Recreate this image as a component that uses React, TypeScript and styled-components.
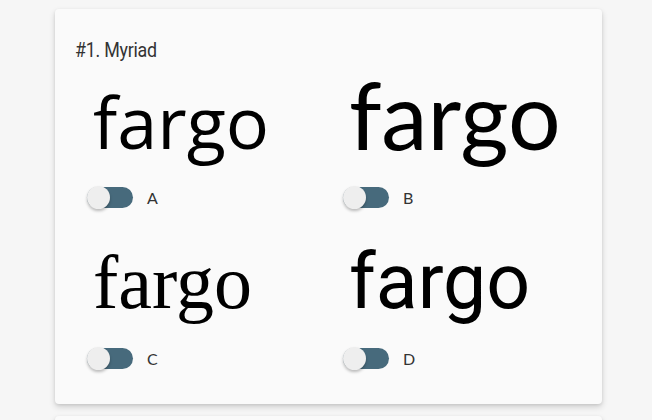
import styled, { createGlobalStyle } from 'styled-components'

const GlobalStyle = createGlobalStyle`
	body {
		margin: 0;
		background: #f6f6f6;
		font-family: 'Open Sans', sans-serif;
	}
`

const Page = styled.main`
	display: flex;
	flex-direction: column;
	gap: 12px;
	padding: 9px 0 0 55px;
`

const Card = styled.section`
	width: 547px;
	height: 395px;
	box-sizing: border-box;
	padding: 28px 20px 0;
	background: #fafafa;
	border-radius: 4px;
	box-shadow: 0 3px 6px rgba(0, 0, 0, 0.16), 0 1px 3px rgba(0, 0, 0, 0.08);
	flex-shrink: 0;
`

const Title = styled.h2`
	margin: 0;
	font-family: 'Roboto', sans-serif;
	font-weight: 400;
	font-size: 21px;
	line-height: 26px;
	color: #333;
	letter-spacing: -0.3px;
	transform: scaleX(0.85);
	transform-origin: left center;
`

const Grid = styled.div`
	display: grid;
	grid-template-columns: 256px 256px;
	grid-auto-rows: 161px;
	padding: 19px 0 0 12px;
`

const Cell = styled.div`
	display: flex;
	flex-direction: column;
`

const Sample = styled.div<{ $font: string; $size: number; $lh: number }>`
	height: 104px;
	font-family: ${p => p.$font};
	font-size: ${p => p.$size}px;
	line-height: ${p => p.$lh}px;
	color: #000;
	padding-left: 6px;
	white-space: nowrap;
`

const ToggleRow = styled.label`
	display: flex;
	align-items: center;
	gap: 14px;
	height: 22px;
`

const Track = styled.span`
	position: relative;
	width: 46px;
	height: 21px;
	border-radius: 11px;
	background: #476a7c;
`

const Thumb = styled.span`
	position: absolute;
	left: 0;
	top: -1px;
	width: 23px;
	height: 23px;
	border-radius: 50%;
	background: #eeeeee;
	box-shadow: 0 2px 3px rgba(0, 0, 0, 0.25);
`

const Letter = styled.span`
	font-family: 'Lato', 'Open Sans', sans-serif;
	font-size: 16px;
	color: #333;
	letter-spacing: 0.5px;
`

const samples = [
	{ key: 'A', font: "'Open Sans', sans-serif", size: 72, lh: 79 },
	{ key: 'B', font: "'Lato', sans-serif", size: 93, lh: 64 },
	{ key: 'C', font: "'Liberation Serif', serif", size: 76, lh: 78 },
	{ key: 'D', font: "'Roboto', sans-serif", size: 77, lh: 78 },
]

function Toggle({ label }: { label: string }) {
	return (
		<ToggleRow>
			<Track>
				<Thumb />
			</Track>
			<Letter>{label}</Letter>
		</ToggleRow>
	)
}

export default function App() {
	return (
		<>
			<GlobalStyle />
			<Page>
				<Card>
					<Title>#1. Myriad</Title>
					<Grid>
						{samples.map(s => (
							<Cell key={s.key}>
								<Sample $font={s.font} $size={s.size} $lh={s.lh}>
									fargo
								</Sample>
								<Toggle label={s.key} />
							</Cell>
						))}
					</Grid>
				</Card>
				<Card />
			</Page>
		</>
	)
}
